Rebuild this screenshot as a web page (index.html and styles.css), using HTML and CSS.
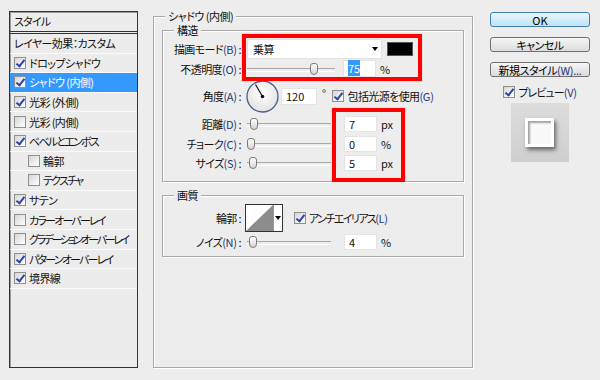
FILE: index.html
```html
<!DOCTYPE html>
<html lang="ja">
<head>
    <meta charset="UTF-8">
    <title>レイヤースタイル</title>
    <link rel="stylesheet" href="styles.css">
</head>
<body>
    <div class="dialog">
        <div class="styles">
            <div class="styles-head">スタイル</div>
            <ul class="style-list">
                <li>レイヤー効果：カスタム</li>
                <li><span class="cb on"></span>ドロップシャドウ</li>
                <li class="selected"><span class="cb on"></span>シャドウ (内側)</li>
                <li><span class="cb on"></span>光彩 (外側)</li>
                <li><span class="cb"></span>光彩 (内側)</li>
                <li class="narrow"><span class="cb on"></span>ベベルとエンボス</li>
                <li class="sub"><span class="cb"></span>輪郭</li>
                <li class="sub narrow"><span class="cb"></span>テクスチャ</li>
                <li><span class="cb on"></span>サテン</li>
                <li class="narrow"><span class="cb"></span>カラーオーバーレイ</li>
                <li class="narrowest"><span class="cb"></span>グラデーションオーバーレイ</li>
                <li class="narrow"><span class="cb on"></span>パターンオーバーレイ</li>
                <li><span class="cb on"></span>境界線</li>
            </ul>
        </div>

        <fieldset class="group main">
            <legend>シャドウ (内側)</legend>

            <fieldset class="group sub structure">
                <legend>構造</legend>
                <div class="row r-blend">
                    <span class="lbl">描画モード<span class="k">(B)</span> :</span>
                    <div class="select">乗算<span class="arrow"></span></div>
                    <span class="swatch"></span>
                </div>
                <div class="row r-opacity">
                    <span class="lbl">不透明度<span class="k">(O)</span> :</span>
                    <div class="slider wide"><span class="thumb" style="left: 63px"></span></div>
                    <span class="num"><span class="hl">75</span></span>
                    <span class="unit">%</span>
                </div>
                <div class="row r-angle">
                    <span class="lbl">角度<span class="k">(A)</span> :</span>
                    <svg class="dial" width="33" height="33" viewBox="0 0 33 33">
                        <defs>
                            <radialGradient id="dg" cx="50%" cy="40%" r="60%">
                                <stop offset="0" stop-color="#ffffff"/>
                                <stop offset="1" stop-color="#e2e2e2"/>
                            </radialGradient>
                        </defs>
                        <circle cx="16.5" cy="16.5" r="15.5" fill="url(#dg)" stroke="#4b5d88" stroke-width="1.3"/>
                        <line x1="16.5" y1="16.5" x2="9.5" y2="4.5" stroke="#111" stroke-width="1.2"/>
                        <circle cx="16.5" cy="16.5" r="1.8" fill="#111"/>
                    </svg>
                    <span class="num angle">120</span>
                    <span class="deg">°</span>
                    <span class="cb on global"></span>
                    <span>包括光源を使用<span class="k">(G)</span></span>
                </div>
                <div class="row r-dist">
                    <span class="lbl">距離<span class="k">(D)</span> :</span>
                    <div class="slider"><span class="thumb" style="left: 3px"></span></div>
                    <span class="num far">7</span>
                    <span class="unit">px</span>
                </div>
                <div class="row r-choke">
                    <span class="lbl">チョーク<span class="k">(C)</span> :</span>
                    <div class="slider"><span class="thumb" style="left: 0"></span></div>
                    <span class="num far">0</span>
                    <span class="unit">%</span>
                </div>
                <div class="row r-size">
                    <span class="lbl">サイズ<span class="k">(S)</span> :</span>
                    <div class="slider"><span class="thumb" style="left: 2px"></span></div>
                    <span class="num far">5</span>
                    <span class="unit">px</span>
                </div>
            </fieldset>

            <fieldset class="group sub quality">
                <legend>画質</legend>
                <div class="row r-contour">
                    <span class="lbl">輪郭 :</span>
                    <div class="contour">
                        <svg width="27" height="26" viewBox="0 0 27 26">
                            <rect width="27" height="26" fill="#fff"/>
                            <polygon points="0,26 27,0 27,26" fill="#8c8c8c"/>
                        </svg>
                        <span class="contour-btn"><span class="arrow"></span></span>
                    </div>
                    <span class="cb on aa"></span>
                    <span class="kana">アンチエイリアス<span class="k">(L)</span></span>
                </div>
                <div class="row r-noise">
                    <span class="lbl">ノイズ<span class="k">(N)</span> :</span>
                    <div class="slider"><span class="thumb" style="left: 2px"></span></div>
                    <span class="num far">4</span>
                    <span class="unit">%</span>
                </div>
            </fieldset>
        </fieldset>

        <div class="actions">
            <button class="btn btn-ok">OK</button>
            <button class="btn">キャンセル</button>
            <button class="btn btn-new">新規スタイル<span class="k">(W)...</span></button>
            <div class="preview-check">
                <span class="cb on"></span>プレビュー<span class="k">(V)</span>
            </div>
            <div class="preview">
                <div class="preview-square"></div>
            </div>
        </div>

        <div class="mark mark-blend"></div>
        <div class="mark mark-values"></div>
    </div>
</body>
</html>
```

FILE: styles.css
```css
* {
    box-sizing: border-box;
}

body {
    margin: 0;
    background-color: #ededed;
    color: #111;
    font-family: "Noto Sans CJK JP", "Noto Sans", sans-serif;
    font-size: 11px;
    font-feature-settings: "palt";
    letter-spacing: -0.6px;
}

.dialog {
    position: relative;
    display: flex;
    align-items: flex-start;
    height: 380px;
}

.k {
    color: #26367a;
    letter-spacing: -0.3px;
}

.kana {
    letter-spacing: -1.6px;
}

/* left: style list */
.styles {
    margin: 11px 0 0 9px;
    width: 129px;
    height: 357px;
    border: 1px solid #333;
    box-shadow: inset 1px 1px 0 #9a9a9a;
    background-color: #ececec;
}

.styles-head {
    height: 22px;
    line-height: 19px;
    padding-left: 4px;
    border-bottom: 3px double #333;
    letter-spacing: -0.8px;
}

.style-list {
    list-style: none;
    margin: 0;
    padding: 0;
}

.style-list li {
    height: 19.6px;
    display: flex;
    align-items: center;
    padding-left: 4px;
    border-bottom: 1px solid #fbfbfb;
    white-space: nowrap;
    letter-spacing: -0.6px;
}

.style-list li.narrow {
    letter-spacing: -1.8px;
}

.style-list li.narrowest {
    letter-spacing: -2.4px;
}

.style-list li.sub {
    padding-left: 18px;
}

.style-list li.selected {
    background-color: #3399ff;
    color: #fff;
}

.cb {
    position: relative;
    flex: none;
    width: 12px;
    height: 12px;
    margin-right: 3px;
    border: 1px solid #8f8f8f;
    background: linear-gradient(135deg, #d6d6d6, #ffffff);
}

.cb.on::after {
    content: "";
    position: absolute;
    left: 3px;
    top: 0;
    width: 3px;
    height: 7px;
    border: solid #2b45a8;
    border-width: 0 2px 2px 0;
    transform: rotate(38deg);
}

/* middle: groups */
.group {
    margin: 0;
    padding: 0;
    min-width: 0;
    border: 1px solid #a9a9a9;
    box-shadow: 1px 1px 0 #fff, inset 1px 1px 0 #fff;
}

.group legend {
    padding: 0 3px;
    line-height: 14px;
    background-color: #ededed;
}

.main {
    margin: 9px 0 0 15px;
    width: 320px;
    height: 359px;
    padding: 0 8px;
}

.main > legend {
    margin-left: 3px;
    letter-spacing: -0.5px;
}

.sub > legend {
    margin-left: 11px;
}

.structure {
    padding-bottom: 8px;
}

.quality {
    margin-top: 6px;
    padding-bottom: 5px;
}

.row {
    display: flex;
    align-items: center;
    white-space: nowrap;
}

.lbl {
    flex: none;
    width: 78px;
    margin-right: 6px;
    text-align: right;
}

.r-blend { margin-top: 1px; height: 21px; }
.r-opacity { height: 19px; }
.r-angle { height: 36px; }
.r-dist { height: 20px; }
.r-choke { height: 19px; }
.r-size { height: 20px; }
.r-contour { margin-top: 2px; height: 28px; }
.r-noise { height: 19px; }

.select {
    display: flex;
    align-items: center;
    width: 135px;
    height: 20px;
    padding-left: 5px;
    background-color: #fff;
    border: 1px solid #e2e2e2;
}

.arrow {
    width: 0;
    height: 0;
    border-left: 3.5px solid transparent;
    border-right: 3.5px solid transparent;
    border-top: 4px solid #000;
}

.select .arrow {
    margin-left: auto;
    margin-right: 3px;
}

.swatch {
    width: 26px;
    height: 14px;
    margin-left: 5px;
    background-color: #000;
    border: 1px solid #555;
}

.slider {
    position: relative;
    width: 84px;
    height: 12px;
}

.slider.wide {
    width: 88px;
}

.slider::before {
    content: "";
    position: absolute;
    left: 0;
    right: 0;
    top: 5px;
    height: 2px;
    border-top: 1px solid #a8a8a8;
    border-bottom: 1px solid #fff;
}

.thumb {
    position: absolute;
    top: 0;
    width: 8px;
    height: 12px;
    border: 1px solid #7c7c7c;
    border-radius: 3px 3px 4px 4px;
    background: linear-gradient(#ffffff, #d4d4d4);
}

.num {
    width: 33px;
    height: 17px;
    margin-left: 8px;
    padding-left: 4px;
    line-height: 15px;
    background-color: #fff;
    border: 1px solid #e4e4e4;
    letter-spacing: 0;
}

.num.far {
    margin-left: 13px;
    height: 16px;
    line-height: 14px;
}

.hl {
    background-color: #3399ff;
    color: #fff;
}

.unit {
    margin-left: 4px;
    letter-spacing: 0;
}

.dial {
    display: block;
    margin-left: -1px;
}

.num.angle {
    width: 36px;
    margin-left: 2px;
}

.deg {
    margin: -6px 0 0 5px;
}

.cb.global {
    margin-left: 7px;
    margin-right: 3px;
}

.contour {
    display: flex;
    width: 38px;
    height: 28px;
    margin-left: -2px;
    border: 1px solid #333;
}

.contour svg {
    display: block;
}

.contour-btn {
    display: flex;
    align-items: center;
    justify-content: center;
    width: 9px;
    background-color: #fff;
    border-left: 1px solid #999;
}

.cb.aa {
    margin-left: 11px;
}

/* right: buttons and preview */
.actions {
    display: flex;
    flex-direction: column;
    align-items: center;
    width: 100px;
    margin: 12px 0 0 17px;
}

.btn {
    width: 100px;
    height: 15px;
    margin: 0 0 10px;
    padding: 0;
    border: 1px solid #707070;
    border-radius: 3px;
    background: linear-gradient(#f6f6f6, #dcdcdc);
    color: #000;
    font: inherit;
    letter-spacing: -0.5px;
    line-height: 12px;
}

.btn-ok {
    border-color: #3c7fb1;
    background: linear-gradient(#eaf6fd, #bfe3f8);
    letter-spacing: 0;
}

.btn-new {
    margin-bottom: 8px;
}

.preview-check {
    display: flex;
    align-items: center;
    height: 13px;
    letter-spacing: -0.9px;
}

.preview {
    display: flex;
    align-items: center;
    justify-content: center;
    width: 58px;
    height: 59px;
    margin-top: 5px;
    background: linear-gradient(#dcdcdc, #cfcfcf);
}

.preview-square {
    width: 29px;
    height: 29px;
    margin: 0 1px 0 0;
    background-color: #f8f8f8;
    border: 3px solid #fff;
    box-shadow: 2px 3px 4px rgba(0, 0, 0, 0.5), inset 2px 2px 2px rgba(0, 0, 0, 0.35);
}

/* red annotation frames */
.mark {
    position: absolute;
    border: 4px solid #f00;
    box-shadow: 0 0 1px rgba(0, 0, 0, 0.3);
}

.mark-blend {
    left: 242px;
    top: 34px;
    width: 180px;
    height: 47px;
}

.mark-values {
    left: 332px;
    top: 108px;
    width: 73px;
    height: 74px;
}
```
